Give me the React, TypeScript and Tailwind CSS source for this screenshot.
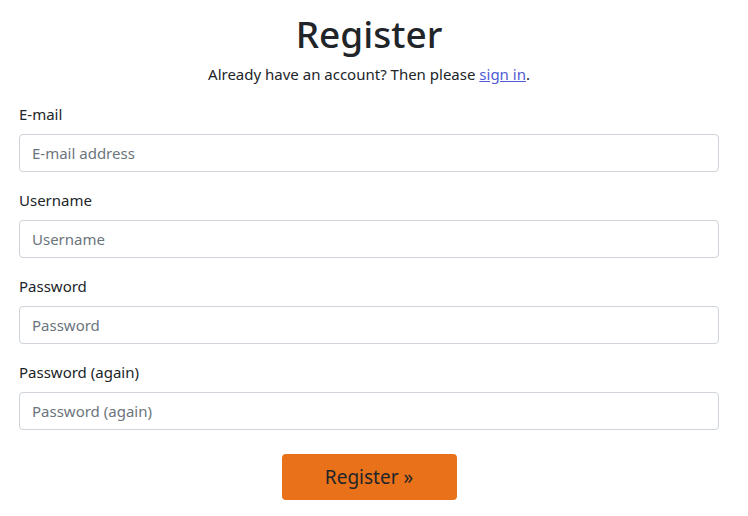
export default function App() {
  const fields = [
    { label: "E-mail", placeholder: "E-mail address", type: "email" },
    { label: "Username", placeholder: "Username", type: "text" },
    { label: "Password", placeholder: "Password", type: "password" },
    { label: "Password (again)", placeholder: "Password (again)", type: "password" },
  ];

  return (
    <main className="min-h-screen bg-white font-['Noto_Sans',sans-serif] text-[#212529]">
      <div className="w-[700px] ml-[19px] pt-[10px]">
        <h1 className="text-center text-[37px] leading-[48px] font-medium">Register</h1>
        <p className="text-center text-[15px] leading-6 mt-[4px]">
          Already have an account? Then please{" "}
          <a href="#" className="text-[#4f5bd5] underline">
            sign in
          </a>
          .
        </p>

        <form className="mt-[16px] flex flex-col gap-[16px]">
          {fields.map((f) => (
            <div key={f.label}>
              <label className="block text-[15px] leading-6 mb-[8px]">{f.label}</label>
              <input
                type={f.type}
                placeholder={f.placeholder}
                className="block w-full h-[38px] px-3 text-[15px] border border-[#ced4da] rounded-[4px] placeholder:text-[#6c757d] outline-none"
              />
            </div>
          ))}

          <div className="flex justify-center mt-[8px]">
            <button
              type="button"
              className="w-[175px] h-[46px] rounded-[4px] bg-[#e8711a] text-[19px] text-[#212529]"
            >
              Register »
            </button>
          </div>
        </form>
      </div>
    </main>
  );
}
